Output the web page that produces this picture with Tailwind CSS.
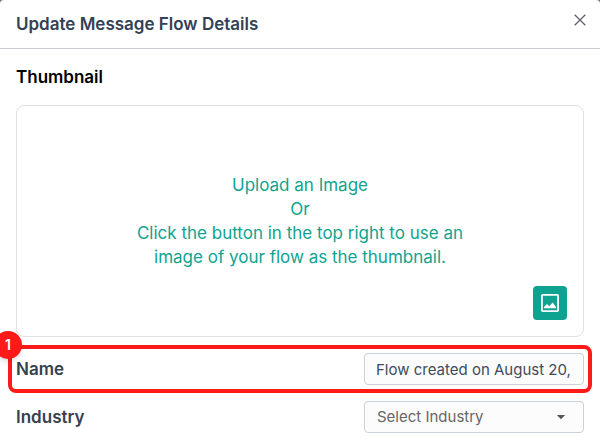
<!DOCTYPE html>
<html lang="en" class="bg-[#777]">
<head>
<meta charset="utf-8">
<meta name="viewport" content="width=device-width, initial-scale=1">
<title>Update Message Flow Details</title>
<script src="https://cdn.jsdelivr.net/npm/@tailwindcss/browser@4"></script>
</head>
<body class="overflow-x-hidden font-['Inter',sans-serif] text-[17px]">
<main role="dialog" aria-labelledby="dialog-title" class="flex min-h-screen flex-col rounded-t-sm bg-white">
  <header class="flex items-start justify-between border-b border-[#c9cbd3] pl-4 pr-3 pb-3 pt-3">
    <h1 id="dialog-title" class="font-semibold leading-6 text-[#334155]">Update Message Flow Details</h1>
    <button type="button" aria-label="Close" class="flex size-4 items-center justify-center text-[#5f6368]">
      <svg class="size-3" viewBox="0 0 12 12" fill="none" stroke="currentColor" stroke-width="1.3" aria-hidden="true"><path d="M.7.7l10.6 10.6M11.3.7L.7 11.3"/></svg>
    </button>
  </header>
  <section class="flex flex-col px-4 pb-3 pt-4">
    <h2 class="font-semibold leading-6 text-black">Thumbnail</h2>
    <div class="relative mt-4 flex h-58 items-center justify-center rounded-lg border border-[#dfe1e6]">
      <p class="text-center leading-6 text-[#10a390]">Upload an Image<br>Or<br>Click the button in the top right to use an<br>image of your flow as the thumbnail.</p>
      <button type="button" aria-label="Use flow image as thumbnail" class="absolute bottom-4 right-4 flex size-[34px] items-center justify-center rounded-sm bg-[#0ea391] text-white">
        <svg class="size-[18px]" viewBox="0 0 18 18" aria-hidden="true"><rect x=".9" y=".9" width="16.2" height="16.2" rx=".8" fill="none" stroke="currentColor" stroke-width="1.8"/><path d="M3 14.200V13l3-3 2.300 2.300L11.700 8.600 15 13v1.200z" fill="currentColor"/></svg>
      </button>
    </div>
    <div class="relative mt-4 flex items-center justify-between">
      <label for="name" class="font-semibold leading-6 text-[#374151]">Name</label>
      <input id="name" type="text" value="Flow created on August 20," class="h-8 w-[220px] rounded-sm border border-[#cbd0da] bg-[#fcfcfd] pl-[11px] pr-2 text-[15px] text-[#3f4a5a] outline-none">
      <div class="pointer-events-none absolute -inset-2 rounded-lg border-4 border-[#ff1a1a]"></div>
      <span class="absolute -left-[22px] -top-[22px] flex size-7 items-center justify-center rounded-full bg-[#ff1a1a] text-sm font-semibold text-white shadow-md">1</span>
    </div>
    <div class="mt-4 flex items-center justify-between">
      <label for="industry" class="font-semibold leading-6 text-[#374151]">Industry</label>
      <div class="relative">
        <select id="industry" class="h-8 w-[220px] appearance-none rounded-sm border border-[#cbd0da] bg-[#fcfcfd] pl-3 pr-8 text-[15px] text-[#666]">
          <option>Select Industry</option>
        </select>
        <svg class="pointer-events-none absolute right-[19px] top-3.5 h-1 w-2 text-[#555]" viewBox="0 0 8 4" fill="currentColor" aria-hidden="true"><path d="M.5 0h7q.7 0 .2.500L4.500 3.700q-.5.500-1 0L.3.500Q-.2 0 .5 0z"/></svg>
      </div>
    </div>
  </section>
</main>
</body>
</html>
